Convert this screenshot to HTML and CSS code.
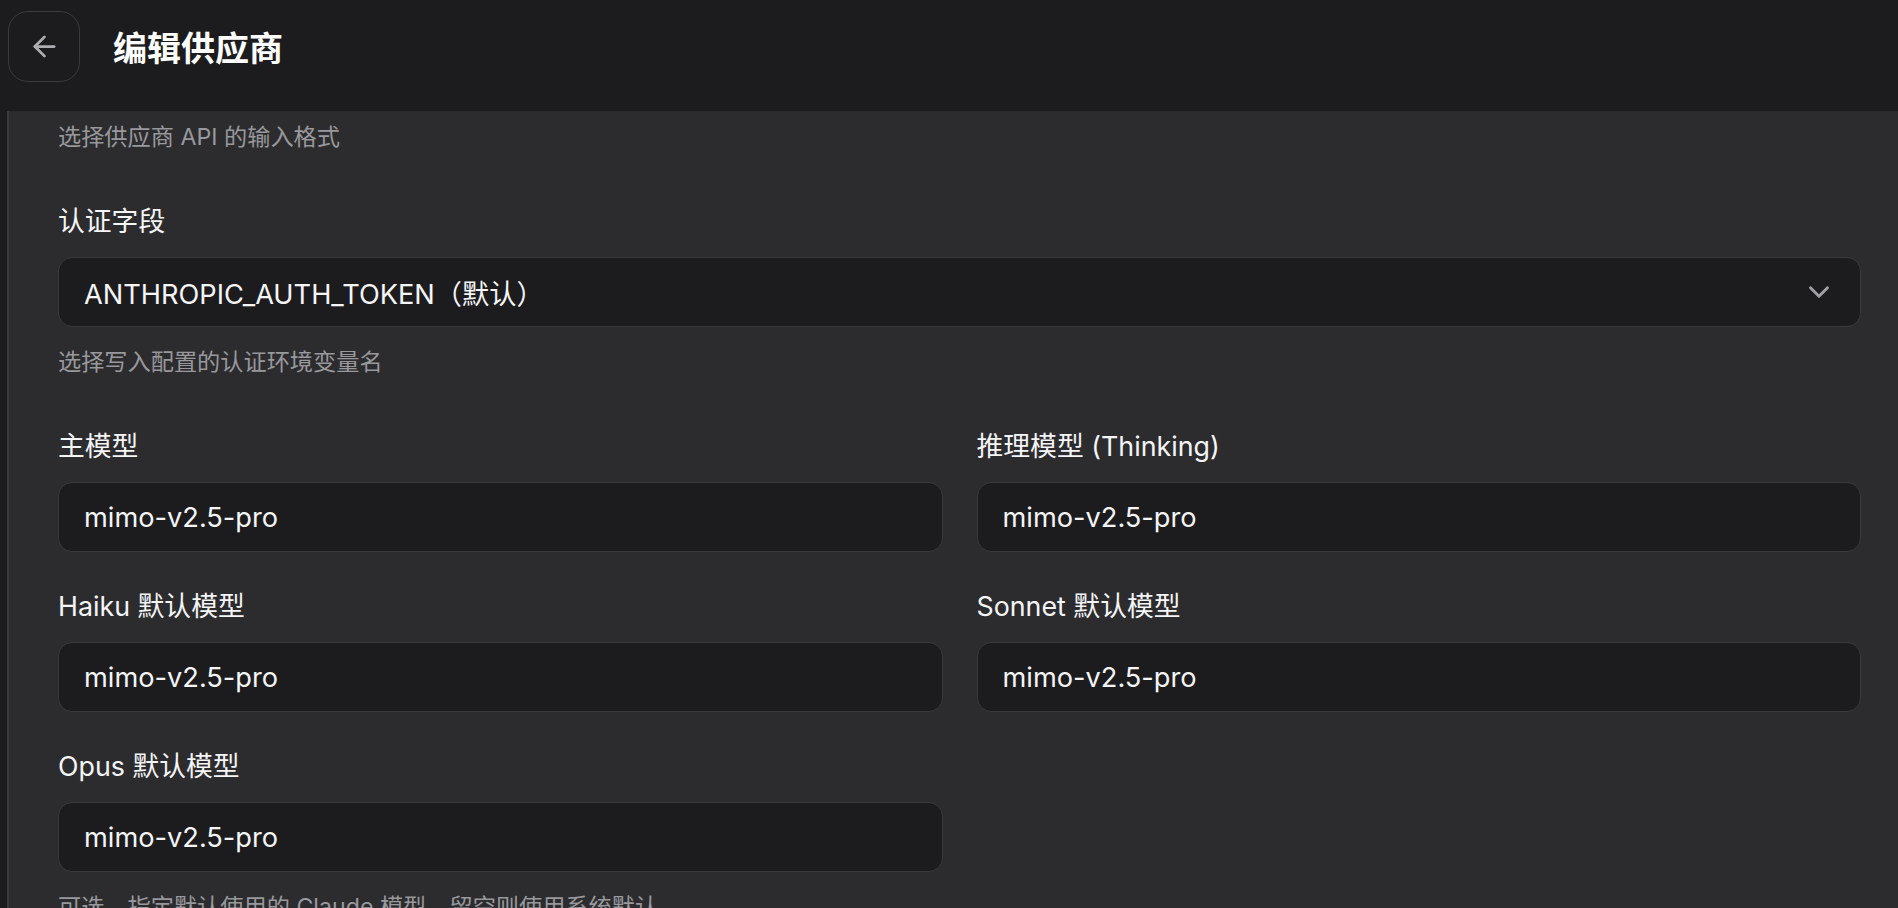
FILE: index.html
```html
<!DOCTYPE html>
<html lang="zh-CN">
<head>
<meta charset="utf-8">
<title>编辑供应商</title>
<link rel="stylesheet" href="styles.css">
</head>
<body>
<header class="topbar">
  <button class="back-btn" aria-label="返回">
    <svg viewBox="0 0 24 24" width="33" height="33" fill="none" stroke="currentColor" stroke-width="2" stroke-linecap="round" stroke-linejoin="round"><path d="M19 12H5"/><path d="M12 19l-7-7 7-7"/></svg>
  </button>
  <h1 class="title">编辑供应商</h1>
</header>
<div class="shell">
  <main class="panel">
    <div class="form">
      <p class="hint">选择供应商 API 的输入格式</p>

      <section class="group">
        <label class="label">认证字段</label>
        <div class="control select">
          <span>ANTHROPIC_AUTH_TOKEN（默认）</span>
          <svg class="chev" viewBox="0 0 24 24" width="34" height="34" fill="none" stroke="currentColor" stroke-width="2" stroke-linecap="round" stroke-linejoin="round"><path d="m6 9 6 6 6-6"/></svg>
        </div>
        <p class="hint">选择写入配置的认证环境变量名</p>
      </section>

      <section class="group">
        <div class="grid">
          <div class="field">
            <label class="label">主模型</label>
            <div class="control">mimo-v2.5-pro</div>
          </div>
          <div class="field">
            <label class="label">推理模型 (Thinking)</label>
            <div class="control">mimo-v2.5-pro</div>
          </div>
          <div class="field">
            <label class="label">Haiku 默认模型</label>
            <div class="control">mimo-v2.5-pro</div>
          </div>
          <div class="field">
            <label class="label">Sonnet 默认模型</label>
            <div class="control">mimo-v2.5-pro</div>
          </div>
          <div class="field">
            <label class="label">Opus 默认模型</label>
            <div class="control">mimo-v2.5-pro</div>
          </div>
        </div>
        <p class="hint">可选，指定默认使用的 Claude 模型，留空则使用系统默认</p>
      </section>
    </div>
  </main>
</div>
</body>
</html>
```

FILE: styles.css
```css
* { box-sizing: border-box; }

html, body {
  margin: 0;
  padding: 0;
  height: 100%;
  overflow: hidden;
}

body {
  background: #1c1c1e;
  color: #f5f5f7;
  font-family: "Inter", "Noto Sans CJK SC", "Noto Sans", sans-serif;
}

.topbar {
  height: 111px;
  background: #1c1c1e;
  display: flex;
  align-items: flex-start;
  gap: 33px;
  padding: 11px 0 0 8px;
}

.back-btn {
  width: 72px;
  height: 71px;
  border: 1.5px solid #3a3a3c;
  border-radius: 20px;
  background: #1c1c1e;
  color: #aeaeb2;
  display: flex;
  align-items: center;
  justify-content: center;
  padding: 0;
}

.title {
  margin: 0;
  height: 71px;
  display: flex;
  align-items: center;
  font-size: 34px;
  font-weight: 700;
  color: #ffffff;
}

.shell {
  padding-left: 7px;
  background: #1c1c1e;
  height: calc(100% - 111px);
}

.panel {
  height: 100%;
  background: #2c2c2e;
  border-left: 2px solid #3a3a3c;
  padding: 9px 37px 0 49px;
}

.form {
  display: flex;
  flex-direction: column;
  gap: 49px;
}

.group {
  display: flex;
  flex-direction: column;
  gap: 18px;
}

.hint {
  margin: 0;
  font-size: 23.2px;
  line-height: 34px;
  color: #98989d;
}

.label {
  display: block;
  font-size: 26.8px;
  line-height: 36px;
  color: #f5f5f7;
}

.grid {
  display: grid;
  grid-template-columns: 1fr 1fr;
  column-gap: 34px;
  row-gap: 36px;
}

.field {
  display: flex;
  flex-direction: column;
  gap: 18px;
}

.control {
  height: 70px;
  background: #1c1c1e;
  border: 1.5px solid #3a3a3c;
  border-radius: 14px;
  padding: 0 25px;
  display: flex;
  align-items: center;
  font-size: 27.2px;
  color: #f5f5f7;
}

.select {
  height: 70px;
  justify-content: space-between;
  padding-right: 24px;
}

.chev {
  color: #a1a1a6;
}
```
